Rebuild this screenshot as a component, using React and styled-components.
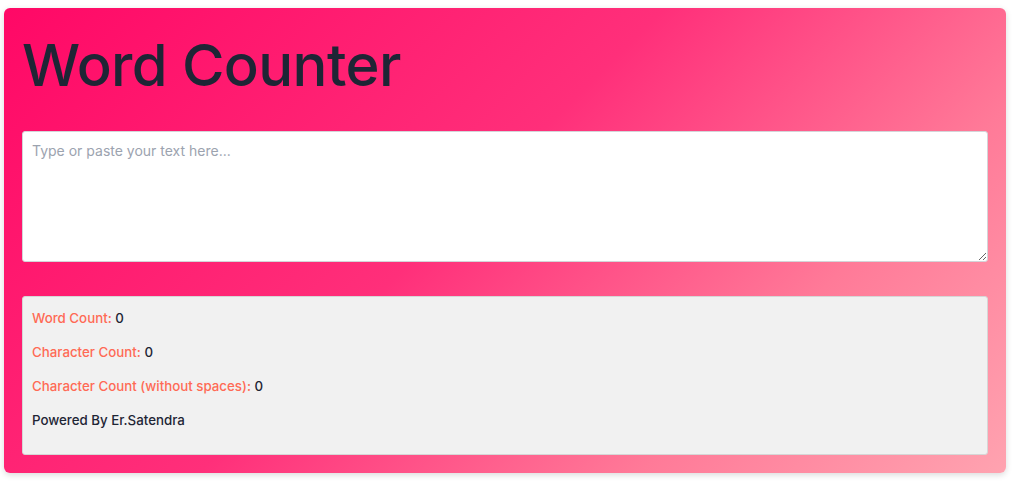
import React, { useState } from "react";
import styled, { createGlobalStyle } from "styled-components";

const Global = createGlobalStyle`
  html, body { margin: 0; padding: 0; background: #ffffff; }
  body { font-family: "Inter", "Liberation Sans", sans-serif; }
  * { box-sizing: border-box; }
`;

const Page = styled.div`
  padding: 8px 18px 10px 4px;
`;

const Card = styled.main`
  background: linear-gradient(135deg, #ff0866 0%, #ff2f7a 45%, #ff7a98 75%, #ffa3b0 100%);
  border-radius: 6px;
  box-shadow: 0 2px 6px rgba(0, 0, 0, 0.15);
  padding: 18px;
  display: flex;
  flex-direction: column;
`;

const Title = styled.h1`
  margin: 4px 0 31px;
  font-family: "Inter", "Liberation Sans", sans-serif;
  font-size: 58px;
  font-weight: 500;
  line-height: 70px;
  letter-spacing: -0.6px;
  color: #1e2535;
`;

const TextArea = styled.textarea`
  display: block;
  width: 100%;
  height: 131px;
  padding: 10px 9px;
  border: 1px solid #d4d4d8;
  border-radius: 3px;
  background: #ffffff;
  font-family: "Inter", "Liberation Sans", sans-serif;
  font-size: 14px;
  line-height: 18px;
  color: #1f2937;
  outline: none;
  &::placeholder { color: #9ca3af; }
`;

const Stats = styled.section`
  margin-top: 34px;
  background: #f1f1f1;
  border: 1px solid #d6d6d6;
  border-radius: 3px;
  padding: 11px 9px 24px;
  display: flex;
  flex-direction: column;
  gap: 14px;
`;

const Row = styled.p`
  margin: 0;
  font-size: 13.3px;
  line-height: 20px;
  color: #1e2535;
  font-weight: 500;
`;

const Label = styled.span`
  color: #ff6a55;
`;

export default function App() {
  const [text, setText] = useState("");
  const words = text.trim() ? text.trim().split(/\s+/).length : 0;
  const chars = text.length;
  const charsNoSpace = text.replace(/\s/g, "").length;
  return (
    <>
      <Global />
      <Page>
        <Card>
          <Title>Word Counter</Title>
          <TextArea
            placeholder="Type or paste your text here..."
            value={text}
            onChange={(e) => setText(e.target.value)}
          />
          <Stats>
            <Row><Label>Word Count:</Label> {words}</Row>
            <Row><Label>Character Count:</Label> {chars}</Row>
            <Row><Label>Character Count (without spaces):</Label> {charsNoSpace}</Row>
            <Row>Powered By Er.Satendra</Row>
          </Stats>
        </Card>
      </Page>
    </>
  );
}
